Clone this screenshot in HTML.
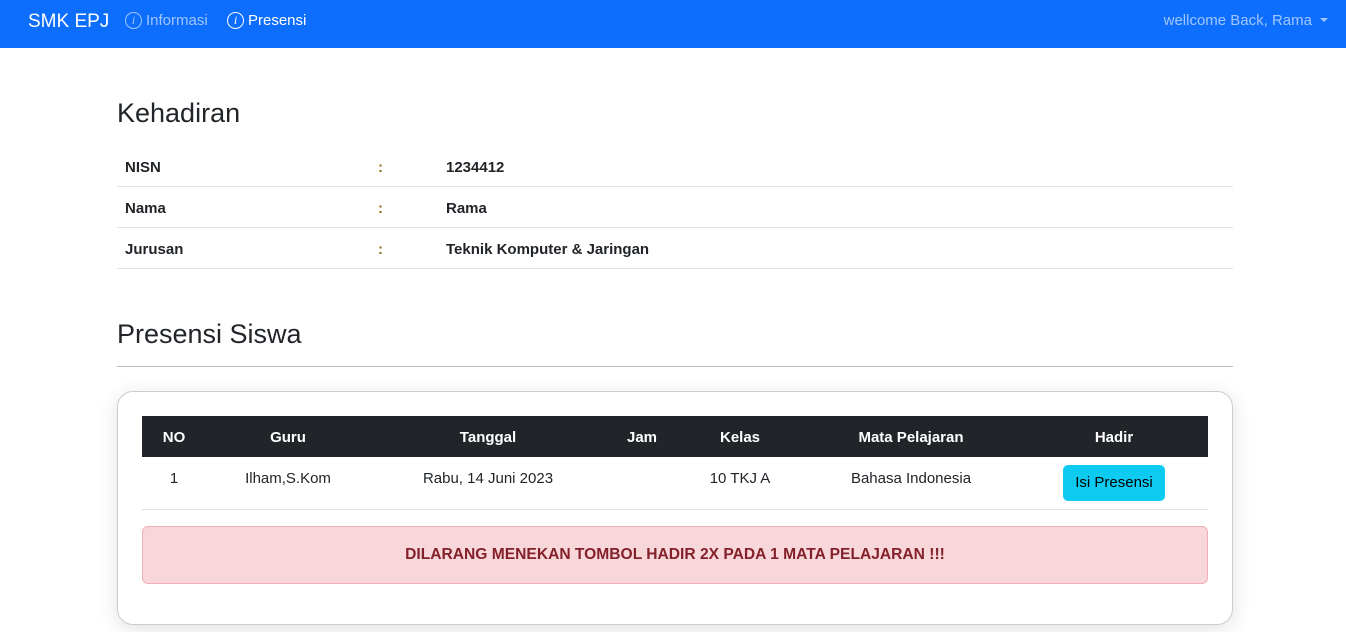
<!DOCTYPE html>
<html><head><style>
*{box-sizing:border-box;margin:0;padding:0}
body{width:1346px;height:632px;overflow:hidden;font-family:"Liberation Sans",sans-serif;color:#212529;background:#fff;font-size:15px}
.nav{height:48px;background:#0d6efd;position:relative;color:#fff}
.brand{position:absolute;left:28px;top:11px;font-size:19px}
.link{position:absolute;top:12px;font-size:15px;display:flex;align-items:center;gap:4px}
.ic{width:17px;height:17px;border:1.5px solid currentColor;border-radius:50%;font-size:12px;font-style:italic;text-align:center;line-height:14px;font-family:"Liberation Serif",serif}
.right{position:absolute;right:18px;top:12px;color:rgba(255,255,255,.6);font-size:15px}
.right:after{content:"";display:inline-block;margin-left:8px;vertical-align:3px;border-top:4px solid rgba(255,255,255,.6);border-left:4px solid transparent;border-right:4px solid transparent}
h2{position:absolute;left:117px;font-size:27px;font-weight:normal}
.info{position:absolute;left:117px;top:146px;width:1116px}
.row{height:41px;border-bottom:1px solid #dee2e6;font-weight:bold;position:relative;font-size:15px}
.row span{position:absolute;top:13px}
.hr{position:absolute;left:117px;top:366px;width:1116px;border-top:1px solid #bbb}
.card{position:absolute;left:117px;top:391px;width:1116px;height:234px;border:1px solid #ccc;border-radius:16px;box-shadow:0 4px 20px rgba(0,0,0,.12)}
.th{position:absolute;left:24px;top:24px;width:1066px;height:41px;background:#212529;color:#fff;font-weight:bold}
.th span,.tr span{position:absolute;top:13px;transform:translateX(-50%)}
.tr{position:absolute;left:24px;top:65px;width:1066px;height:53px;border-bottom:1px solid #dee2e6}
.btn{position:absolute;left:921px;top:8px;width:102px;height:36px;background:#0dcaf0;border-radius:5px;text-align:center;line-height:36px;color:#000}
.alert{position:absolute;left:24px;top:134px;width:1066px;height:58px;background:#f8d7da;border:1px solid #f1aeb5;border-radius:6px;color:#842029;font-weight:bold;text-align:center;line-height:56px;font-size:15.6px}
</style></head><body>
<div class="nav">
<div class="brand">SMK EPJ</div>
<div class="link" style="left:125px;color:rgba(255,255,255,.6)"><span class="ic">i</span>Informasi</div>
<div class="link" style="left:227px"><span class="ic">i</span>Presensi</div>
<div class="right">wellcome Back, Rama</div>
</div>
<h2 style="top:98px">Kehadiran</h2>
<div class="info">
<div class="row"><span style="left:8px">NISN</span><span style="left:261px;color:#8a6d1d">:</span><span style="left:329px">1234412</span></div>
<div class="row"><span style="left:8px">Nama</span><span style="left:261px;color:#8a6d1d">:</span><span style="left:329px">Rama</span></div>
<div class="row"><span style="left:8px">Jurusan</span><span style="left:261px;color:#8a6d1d">:</span><span style="left:329px">Teknik Komputer &amp; Jaringan</span></div>
</div>
<h2 style="top:319px">Presensi Siswa</h2>
<div class="hr"></div>
<div class="card">
<div class="th"><span style="left:32px">NO</span><span style="left:146px">Guru</span><span style="left:346px">Tanggal</span><span style="left:500px">Jam</span><span style="left:598px">Kelas</span><span style="left:769px">Mata Pelajaran</span><span style="left:972px">Hadir</span></div>
<div class="tr"><span style="left:32px">1</span><span style="left:146px">Ilham,S.Kom</span><span style="left:346px">Rabu, 14 Juni 2023</span><span style="left:598px">10 TKJ A</span><span style="left:769px">Bahasa Indonesia</span><div class="btn">Isi Presensi</div></div>
<div class="alert">DILARANG MENEKAN TOMBOL HADIR 2X PADA 1 MATA PELAJARAN !!!</div>
</div>
</body></html>
